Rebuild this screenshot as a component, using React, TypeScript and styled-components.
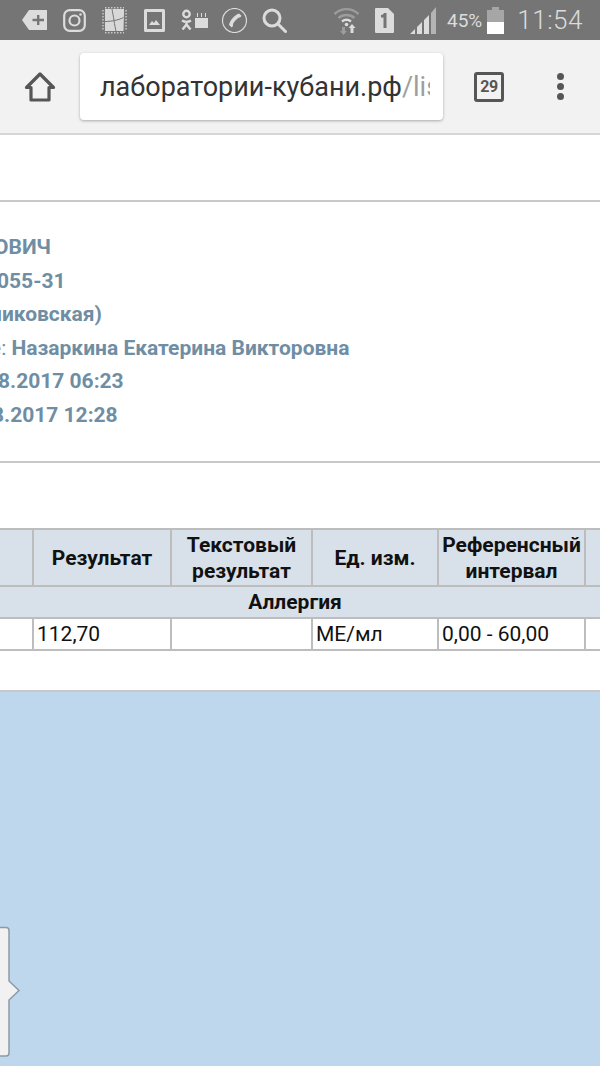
import React from 'react';
import styled, { createGlobalStyle } from 'styled-components';

const GlobalStyle = createGlobalStyle`
    html, body {
        margin: 0;
        padding: 0;
        background: #fff;
    }
    body {
        font-family: Roboto, "Noto Sans", sans-serif;
    }
`;

const Page = styled.div`
    position: relative;
    width: 600px;
    height: 1066px;
    overflow: hidden;
    display: flex;
    flex-direction: column;
`;

const StatusBar = styled.div`
    height: 40px;
    flex: none;
    background: #757575;
    display: flex;
    align-items: center;
    padding: 0 18px 0 22px;
    color: #dcdcdc;
`;

const Icon = styled.svg<{ $left?: number }>`
    flex: none;
    display: block;
    margin-left: ${(props) => props.$left ?? 0}px;
`;

const Percent = styled.span`
    margin-left: 11px;
    width: 36px;
    font-size: 19px;
    white-space: nowrap;
`;

const Clock = styled.span`
    margin-left: 13px;
    font-size: 26px;
    font-weight: 300;
    letter-spacing: 0.5px;
    white-space: nowrap;
`;

const Toolbar = styled.div`
    height: 95px;
    flex: none;
    box-sizing: border-box;
    background: #f2f2f2;
    border-bottom: 2px solid #d6d6d6;
    display: flex;
    align-items: center;
    padding: 0 0 0 24px;
`;

const AddressBar = styled.div`
    width: 363px;
    height: 67px;
    margin-left: 24px;
    box-sizing: border-box;
    padding: 0 13px 0 20px;
    background: #fff;
    border-radius: 4px;
    box-shadow: 0 1px 3px rgba(0, 0, 0, 0.3);
    display: flex;
    align-items: center;
`;

const UrlText = styled.div`
    flex: 1;
    min-width: 0;
    overflow: hidden;
    white-space: nowrap;
    font-size: 27px;
    color: #333;
`;

const UrlTail = styled.span`
    color: #9e9e9e;
`;

const TabCount = styled.div`
    width: 30px;
    height: 30px;
    margin-left: 31px;
    box-sizing: border-box;
    border: 3px solid #565656;
    border-radius: 3px;
    display: flex;
    align-items: center;
    justify-content: center;
    font-size: 16px;
    font-weight: 700;
    letter-spacing: -0.5px;
    color: #565656;
`;

const MenuDots = styled.div`
    margin-left: 53px;
    display: flex;
    flex-direction: column;
    gap: 3px;
`;

const Dot = styled.span`
    width: 7px;
    height: 7px;
    border-radius: 50%;
    background: #565656;
`;

const Spacer = styled.div`
    height: 65px;
    flex: none;
    background: #fff;
    border-bottom: 2px solid #c8c8c8;
`;

const Info = styled.div`
    height: 261px;
    flex: none;
    box-sizing: border-box;
    padding-top: 29px;
    border-bottom: 2px solid #c8c8c8;
    overflow: hidden;
`;

const InfoLine = styled.div<{ $shift: number }>`
    height: 33.5px;
    line-height: 33.5px;
    margin-left: ${(props) => props.$shift}px;
    font-size: 21px;
    font-weight: 700;
    color: #6f8ea3;
    white-space: nowrap;
`;

const Plain = styled.span`
    font-weight: 400;
`;

const TableArea = styled.div`
    height: 229px;
    flex: none;
    box-sizing: border-box;
    padding-top: 65px;
    background: #fff;
    border-bottom: 2px solid #c8c8c8;
    overflow: hidden;
`;

const ResultTable = styled.table`
    margin-left: -101px;
    width: 790px;
    table-layout: fixed;
    border-collapse: collapse;
    font-size: 21px;
    color: #111;
`;

const HeadCell = styled.th`
    height: 55px;
    padding: 0;
    background: #d8e1e9;
    border: 2px solid #bdbdbd;
    font-weight: 700;
    line-height: 26px;
    text-align: center;
    white-space: nowrap;
`;

const GroupCell = styled.td`
    height: 30px;
    padding: 0;
    background: #d8e1e9;
    border: 2px solid #bdbdbd;
    font-weight: 700;
    text-align: center;
`;

const DataCell = styled.td`
    height: 30px;
    padding: 0 3px;
    background: #fff;
    border: 2px solid #bdbdbd;
    font-weight: 400;
`;

const BlueArea = styled.div`
    flex: 1;
    background: #bfd7ec;
`;

const SideHandle = styled.svg`
    position: absolute;
    left: 0;
    top: 926px;
`;

const headers = [
    '',
    'Результат',
    <>Текстовый<br />результат</>,
    'Ед. изм.',
    <>Референсный<br />интервал</>,
    '',
];

const widths = [133, 138, 141, 126, 147, 105];

const infoLines = [
    { shift: -6, text: 'ОВИЧ', y: 0 },
    { shift: -3, text: '055-31', y: 1 },
    { shift: -10, text: 'никовская)', y: 2 },
];

function App() {
    return (
        <Page>
            <GlobalStyle />
            <StatusBar>
                <Icon width="25" height="20" viewBox="0 0 25 20">
                    <path fill="#dcdcdc" fillRule="evenodd" d="M7 0h18v20H7L0 10zM15 5v3.800h-4.500v2.400H15V15h2.400v-3.800H22V8.800h-4.600V5z" />
                </Icon>
                <Icon $left={16} width="23" height="23" viewBox="0 0 23 23" fill="none" stroke="#dcdcdc" strokeWidth="2.200">
                    <rect x="1.200" y="1.200" width="20.600" height="20.600" rx="5.500" />
                    <circle cx="11.500" cy="11.500" r="5" />
                    <circle cx="17.500" cy="5.500" r="1.300" fill="#dcdcdc" stroke="none" />
                </Icon>
                <Icon $left={16} width="25" height="27" viewBox="0 0 25 27">
                    <path fill="#d8d8d8" d="M3 2h19v4l-.5 18H3z" />
                    <path stroke="#757575" strokeWidth="1" fill="none" d="M10 2c.5 4 1.500 7 2 11.500.5 4 1.500 8 2 11M3 14.500c4 0 7-.5 9.500-1 3-.5 6-1.500 9-3" />
                    <path stroke="#c8c8c8" strokeWidth="1.500" strokeDasharray="1.500 1.500" fill="none" d="M3 .8h19M1 3v21M24 3v20M3 25.800h19" />
                </Icon>
                <Icon $left={17} width="21" height="23" viewBox="0 0 21 23">
                    <path fill="#dcdcdc" fillRule="evenodd" d="M1.500 0h18A1.500 1.500 0 0 1 21 1.500v20a1.500 1.500 0 0 1-1.500 1.500h-18A1.500 1.500 0 0 1 0 21.500v-20A1.500 1.500 0 0 1 1.500 0zM3 3v17h15V3zM5 16l3-4 2 2 2-3 4 5z" />
                </Icon>
                <Icon $left={16} width="27" height="22" viewBox="0 0 27 22" fill="none" stroke="#dcdcdc">
                    <circle cx="5.500" cy="5" r="3.200" strokeWidth="2.400" />
                    <path strokeWidth="2.400" d="M1 11.500c3 1.800 6 1.800 9 0M5.500 13v2.500M1.500 20.500l4-5 4 5" />
                    <path fill="#dcdcdc" stroke="none" d="M14 9h13v10H14zM16 4h1v4h-1zM20 4h1v4h-1zM24 4h1v4h-1z" />
                </Icon>
                <Icon $left={14} width="25" height="25" viewBox="0 0 25 25" fill="none" stroke="#dcdcdc">
                    <circle cx="12.500" cy="12.500" r="12" strokeWidth="1.200" />
                    <path fill="#dcdcdc" stroke="none" d="M17 5.500l2.500 2.300c-.5 1.200-1.500 1.800-3 2-1.800 1.200-4.500 4-5.500 6.200.3 1.500-.2 2.700-1.200 3.500L7 17c1-5 5-9.500 10-11.500z" />
                </Icon>
                <Icon $left={15} width="25" height="25" viewBox="0 0 25 25" fill="none" stroke="#dcdcdc" strokeWidth="3">
                    <circle cx="10" cy="10" r="8" />
                    <path strokeLinecap="round" d="M16 16l7.500 7.500" />
                </Icon>
                <Icon $left={46} width="27" height="29" viewBox="0 0 27 29" fill="none" stroke="#9c9c9c" strokeWidth="2.400">
                    <path d="M1.500 8c7-6.500 17-6.500 24 0M5.500 12c4.500-4 11.500-4 16 0" />
                    <path stroke="#dcdcdc" d="M9 15.500c2.800-2.200 6.200-2.200 9 0" />
                    <circle cx="13.500" cy="18.500" r="1.800" fill="#dcdcdc" stroke="none" />
                    <path fill="#9c9c9c" stroke="none" d="M9 21h3v4h2l-3.500 4L7 25h2z" />
                    <path fill="#dcdcdc" stroke="none" d="M19 18l3.500 4h-2v5h-3v-5h-2z" />
                </Icon>
                <Icon $left={15} width="19" height="25" viewBox="0 0 19 25">
                    <path fill="#dcdcdc" fillRule="evenodd" d="M1 0h12l6 6v18a1 1 0 0 1-1 1H1a1 1 0 0 1-1-1V1a1 1 0 0 1 1-1zM6 7v2.500h2.500V20h3V5H9c-.5 1.200-1.500 2-3 2z" />
                </Icon>
                <Icon $left={16} width="26" height="27" viewBox="0 0 26 27">
                    <path fill="#dcdcdc" d="M0 27l5-5v5zM7 27v-7l5-5v12zM14 27V13l5-5v19z" />
                    <path fill="#b4b4b4" d="M21 27V6l5-6v27z" />
                </Icon>
                <Percent>45%</Percent>
                <Icon $left={5} width="17" height="27" viewBox="0 0 17 27">
                    <path fill="#a6a6a6" d="M5 0h7v3h5v12H0V3h5z" />
                    <path fill="#fff" d="M0 15h17v12H0z" />
                </Icon>
                <Clock>11:54</Clock>
            </StatusBar>

            <Toolbar>
                <Icon width="32" height="32" viewBox="0 0 32 32" fill="none" stroke="#565656" strokeWidth="3.200" strokeLinejoin="round">
                    <path d="M16 3L2.500 16.500H7V29h18V16.500h4.500z" />
                </Icon>
                <AddressBar>
                    <UrlText>
                        лаборатории-кубани.рф<UrlTail>/list</UrlTail>
                    </UrlText>
                </AddressBar>
                <TabCount>29</TabCount>
                <MenuDots>
                    <Dot />
                    <Dot />
                    <Dot />
                </MenuDots>
            </Toolbar>

            <Spacer />

            <Info>
                {infoLines.map((line) => (
                    <InfoLine key={line.y} $shift={line.shift}>{line.text}</InfoLine>
                ))}
                <InfoLine $shift={-10}>
                    <Plain>е:</Plain> Назаркина Екатерина Викторовна
                </InfoLine>
                <InfoLine $shift={-2}>8.2017 06:23</InfoLine>
                <InfoLine $shift={-8}>8.2017 12:28</InfoLine>
            </Info>

            <TableArea>
                <ResultTable>
                    <colgroup>
                        {widths.map((w, i) => (
                            <col key={i} style={{ width: w }} />
                        ))}
                    </colgroup>
                    <thead>
                        <tr>
                            {headers.map((h, i) => (
                                <HeadCell key={i}>{h}</HeadCell>
                            ))}
                        </tr>
                    </thead>
                    <tbody>
                        <tr>
                            <GroupCell colSpan={6}>Аллергия</GroupCell>
                        </tr>
                        <tr>
                            <DataCell />
                            <DataCell>112,70</DataCell>
                            <DataCell />
                            <DataCell>МЕ/мл</DataCell>
                            <DataCell>0,00 - 60,00</DataCell>
                            <DataCell />
                        </tr>
                    </tbody>
                </ResultTable>
            </TableArea>

            <BlueArea />

            <SideHandle width="22" height="132" viewBox="0 0 22 132">
                <path fill="#f1f1f1" stroke="#8c9aa6" strokeWidth="1.500" d="M-2 1.500h8a3 3 0 0 1 3 3V55l10 9.500-10 9.500v53a3 3 0 0 1-3 3h-8z" />
            </SideHandle>
        </Page>
    );
}

export default App;
